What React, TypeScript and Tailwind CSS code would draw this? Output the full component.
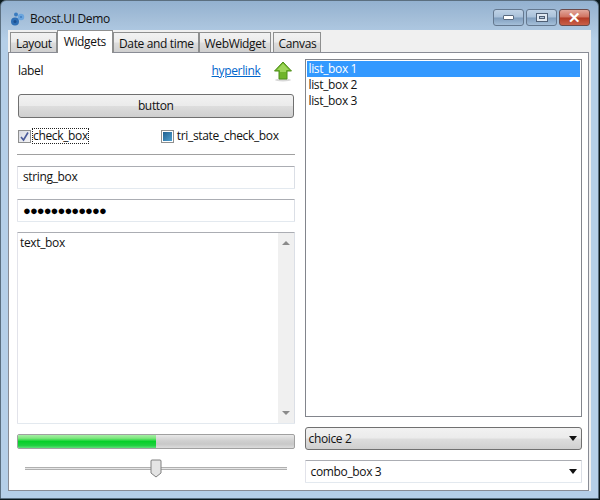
import React from "react";

const tabs = ["Layout", "Widgets", "Date and time", "WebWidget", "Canvas"];

function GearLogo() {
	return (
		<svg width="16" height="16" viewBox="0 0 16 16" className="shrink-0">
			<circle cx="5" cy="10.5" r="4" fill="#2f6fb5" />
			<circle cx="5" cy="10.5" r="1.5" fill="#1c4f8f" />
			<circle cx="11" cy="6" r="3.2" fill="#6aa5de" />
			<circle cx="11" cy="6" r="1.1" fill="#3f7fc4" />
			<circle cx="6" cy="3.5" r="2" fill="#3a7cc0" />
		</svg>
	);
}

function ArrowUp() {
	return (
		<svg width="20" height="21" viewBox="0 0 20 21" className="shrink-0">
			<ellipse cx="10" cy="19" rx="8" ry="1.5" fill="#d8d8d8" />
			<path d="M10 1 L18.5 10 H14 V18 H6 V10 H1.5 Z" fill="#6fb42a" stroke="#4f8f1a" strokeWidth="1" />
			<path d="M10 2.5 L16 9 H13 V11 H7 V9 H4 Z" fill="#9ed65a" />
		</svg>
	);
}

function WinButton({ children, close }: { children: React.ReactNode; close?: boolean }) {
	return (
		<div
			className={
				close
					? "flex h-[17px] w-[31px] items-center justify-center rounded-[3px] border border-[#6b4a4a] bg-[linear-gradient(#e2a79c_0%,#d0715f_48%,#b23a25_52%,#c9604a_100%)]"
					: "flex h-[17px] w-[31px] items-center justify-center rounded-[3px] border border-[#64788f] bg-[linear-gradient(#bfd2e6_0%,#a9c1da_48%,#7f9dbd_52%,#a5bfd9_100%)]"
			}
		>
			{children}
		</div>
	);
}

function Caret() {
	return (
		<svg width="8" height="5" viewBox="0 0 8 5" className="shrink-0">
			<path d="M0 0 H8 L4 5 Z" fill="#111" />
		</svg>
	);
}

function Field({ children, className }: { children: React.ReactNode; className?: string }) {
	return (
		<div className={"flex items-center rounded-[1px] border border-t-[#abadb3] border-r-[#dbdfe6] border-b-[#e3e9ef] border-l-[#e2e3ea] bg-white " + (className ?? "")}>
			{children}
		</div>
	);
}

export default function App() {
	return (
		<div className="h-[500px] w-[600px] overflow-hidden bg-[#0c1a1e] font-['Open_Sans','Noto_Sans',sans-serif] text-[12px] leading-[16px] tracking-[-0.35px] text-[#111]">
			<div className="flex h-[499px] w-[599px] flex-col rounded-t-[6px] border border-[#5b6f80] bg-[linear-gradient(#93b1d0_0%,#a6c0da_4%,#b5cfe8_8%,#b5cfe8_100%)]">
				{/* title bar */}
				<div className="flex h-[29px] shrink-0 items-center pl-[9px] pr-[8px]">
					<div className="mt-[6px] flex flex-1 items-center">
						<GearLogo />
						<span className="ml-[4px] text-[12px] text-[#111]">Boost.UI Demo</span>
					</div>
					<div className="mt-[3px] flex gap-[2px]">
						<WinButton>
							<div className="h-[5px] w-[11px] rounded-[1px] border border-[#5a6b80] bg-white" />
						</WinButton>
						<WinButton>
							<div className="flex h-[9px] w-[12px] items-center justify-center border border-[#4f5f75] bg-[#dfe8f2]">
								<div className="h-[3px] w-[6px] border border-[#4f5f75] bg-[#b5c8dd]" />
							</div>
						</WinButton>
						<WinButton close>
							<span className="text-[15px] font-bold leading-none text-white">✕</span>
						</WinButton>
					</div>
				</div>

				{/* client area */}
				<div className="ml-[7px] mr-[7px] flex h-[461px] flex-col bg-[#f0f0f0]">
					<div className="flex h-[22px] shrink-0 items-end pl-[2px]">
						{tabs.map((t) =>
							t === "Widgets" ? (
								<div key={t} className="relative z-10 -mb-px flex h-[23px] items-start border border-b-0 border-[#8e8f8f] bg-white px-[6px] pt-[3px]">
									{t}
								</div>
							) : (
								<div key={t} className="flex h-[20px] items-center border border-b-0 border-[#8e8f8f] bg-[linear-gradient(#f2f2f2_0%,#ebebeb_48%,#dddddd_52%,#cfcfcf_100%)] pl-[5px] pr-[4px] pt-[2px] last:ml-[2px]">
									{t}
								</div>
							)
						)}
					</div>

					<div className="ml-0 mr-[2px] flex min-h-0 flex-1 gap-[10px] border border-[#898c95] bg-white pb-[6px] pl-[8px] pr-[6px] pt-[6px]">
						{/* left column */}
						<div className="flex w-[278px] flex-col">
							<div className="flex h-[24px] items-center pl-px pr-[2px]">
								<span className="flex-1">label</span>
								<span className="text-[#0066cc] underline">hyperlink</span>
								<div className="ml-[12px]">
									<ArrowUp />
								</div>
							</div>
							<div className="ml-px mr-px mt-[11px] flex h-[24px] items-center justify-center rounded-[3px] border border-[#707070] bg-[linear-gradient(#f2f2f2_0%,#ebebeb_48%,#dddddd_52%,#cfcfcf_100%)]">
								button
							</div>
							<div className="ml-px mt-[10px] flex h-[16px] items-center">
								<div className="flex h-[13px] w-[13px] items-center justify-center border border-[#8e8f8f] bg-[linear-gradient(135deg,#d9dbe3,#f4f4f6)]">
									<svg width="11" height="11" viewBox="0 0 11 11">
										<path d="M2 6 L4.5 9 L9 1.5" fill="none" stroke="#4a5a9a" strokeWidth="1.6" />
									</svg>
								</div>
								<span className="ml-px border border-dotted border-[#222] leading-[14px]">check_box</span>
								<div className="ml-[72px] flex h-[13px] w-[13px] items-center justify-center border border-[#8e8f8f] bg-white">
									<div className="h-[9px] w-[9px] bg-[linear-gradient(135deg,#1f5f8f,#4fa0d0)]" />
								</div>
								<span className="ml-[3px]">tri_state_check_box</span>
							</div>
							<div className="mt-[10px] h-px bg-[#a0a0a0]" />
							<Field className="mt-[11px] h-[23px] px-[5px] pb-[2px]">string_box</Field>
							<Field className="mt-[10px] h-[23px] px-[5px]">
								<span className="text-[13px] font-bold leading-none tracking-[-0.95px] text-black">●●●●●●●●●●●●</span>
							</Field>
							<Field className="mt-[10px] h-[192px] !items-stretch">
								<div className="flex-1 pl-[2px] pt-[2px]">text_box</div>
								<div className="flex w-[16px] flex-col items-center justify-between bg-[#f0f0f0] py-[8px]">
									<svg width="8" height="4" viewBox="0 0 8 4">
										<path d="M4 0 L8 4 H0 Z" fill="#8a8a8a" />
									</svg>
									<svg width="8" height="4" viewBox="0 0 8 4">
										<path d="M0 0 H8 L4 4 Z" fill="#8a8a8a" />
									</svg>
								</div>
							</Field>
							<div className="mt-[10px] flex h-[15px] overflow-hidden rounded-[2px] border border-[#a0a0a0] bg-[linear-gradient(#e8e8e8_0%,#cfcfcf_45%,#c8c8c8_70%,#dcdcdc_100%)]">
								<div className="h-full w-[138px] bg-[linear-gradient(#a6eea6_0%,#7ce67c_25%,#06d02a_50%,#1fd040_80%,#5fe07a_100%)]" />
							</div>
							<div className="relative mt-[18px] ml-[8px] mr-[8px] h-[3px] border-y border-y-[#b0b0b0] bg-[#e6e6e6]">
								<svg width="12" height="19" viewBox="0 0 12 19" className="absolute left-[125px] top-[-9px]">
									<path d="M1.5 1 H10.5 L11 2 V14 L6 18 L1 14 V2 Z" fill="#e4e4e4" stroke="#808080" />
								</svg>
							</div>
						</div>

						{/* right column */}
						<div className="flex w-[278px] flex-col">
							<div className="h-[358px] border border-[#82858c] bg-white p-px">
								<div className="bg-[#3399ff] pl-[2px] text-white">list_box 1</div>
								<div className="pl-[2px]">list_box 2</div>
								<div className="pl-[2px]">list_box 3</div>
							</div>
							<div className="mt-[10px] flex h-[23px] items-center justify-between rounded-[3px] border border-[#707070] bg-[linear-gradient(#f2f2f2_0%,#ebebeb_48%,#dddddd_52%,#cfcfcf_100%)] pl-[3px] pr-[4px]">
								choice 2
								<Caret />
							</div>
							<Field className="mt-[10px] h-[23px] justify-between pl-[5px] pr-[4px]">
								combo_box 3
								<Caret />
							</Field>
						</div>
					</div>
				</div>
			</div>
		</div>
	);
}
